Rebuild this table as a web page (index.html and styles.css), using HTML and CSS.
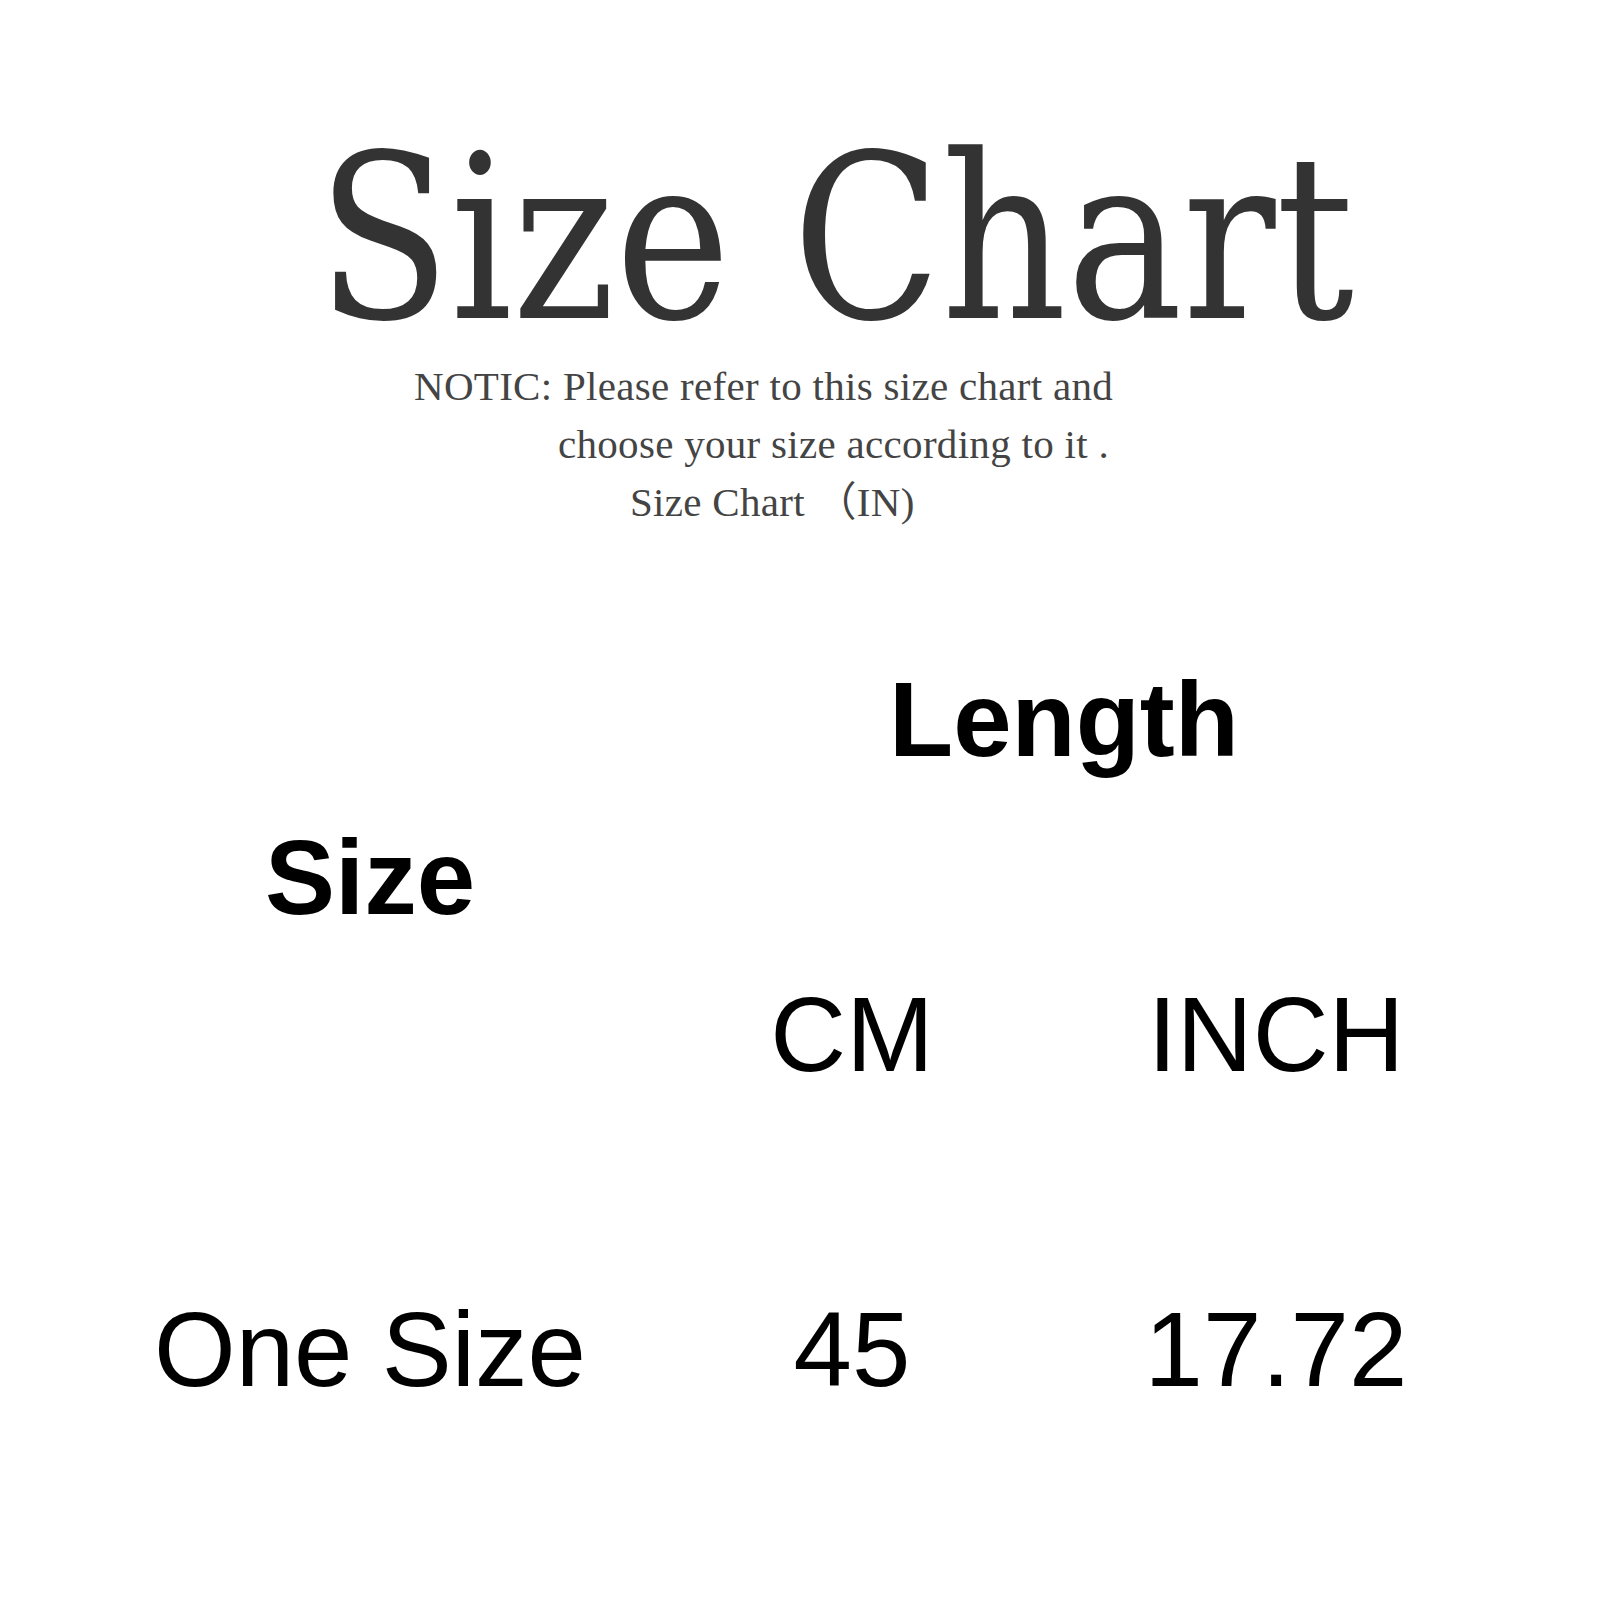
FILE: index.html
```html
<!DOCTYPE html>
<html lang="en">
<head>
<meta charset="utf-8">
<title>Size Chart</title>
<link rel="stylesheet" href="styles.css">
</head>
<body>
<div class="page">
  <h1 class="title"><span class="title-text">Size Chart</span></h1>
  <div class="notice">
    <p class="line line-1">NOTIC: Please refer to this size chart and</p>
    <p class="line line-2">choose your size according to it .</p>
    <p class="line line-3">Size Chart （IN)</p>
  </div>
  <div class="chart">
    <div class="cell head size-head">Size</div>
    <div class="cell head length-head">Length</div>
    <div class="cell unit cm">CM</div>
    <div class="cell unit inch">INCH</div>
    <div class="cell val c1">One Size</div>
    <div class="cell val c2">45</div>
    <div class="cell val c3">17.72</div>
  </div>
</div>
</body>
</html>
```
FILE: styles.css
```css
html, body {
  margin: 0;
  padding: 0;
  background: #ffffff;
}
.page {
  width: 1600px;
  height: 1600px;
  overflow: hidden;
}
.title {
  margin: 124px 0 0 0;
  padding-left: 317px;
  font-family: "DejaVu Serif", serif;
  font-stretch: condensed;
  font-weight: normal;
  font-size: 229px;
  line-height: 229px;
  color: #333333;
  white-space: nowrap;
}
.title-text {
  display: inline-block;
  transform: scaleX(0.945);
  transform-origin: left center;
}
.notice {
  margin-top: 4px;
  font-family: "Liberation Serif", "Noto Sans CJK SC", serif;
  font-size: 41px;
  line-height: 58px;
  letter-spacing: 0.3px;
  color: #444444;
}
.line {
  margin: 0;
  white-space: nowrap;
}
.line-1 { padding-left: 414px; }
.line-2 { padding-left: 558px; }
.line-3 { padding-left: 630px; }

.chart {
  margin-top: 114px;
  margin-left: 100px;
  display: grid;
  grid-template-columns: 540px 424px 424px;
  grid-template-rows: 150px 150px 150px;
  row-gap: 165px;
  font-family: "Liberation Sans", Arial, sans-serif;
  font-size: 105px;
  line-height: 150px;
  color: #000000;
}
.cell {
  text-align: center;
  white-space: nowrap;
}
.head { font-weight: bold; }
.size-head {
  grid-column: 1;
  grid-row: 1 / span 2;
  align-self: center;
}
.length-head {
  grid-column: 2 / span 2;
  grid-row: 1;
}
.cm { grid-column: 2; grid-row: 2; }
.inch { grid-column: 3; grid-row: 2; }
.c1 { grid-column: 1; grid-row: 3; }
.c2 { grid-column: 2; grid-row: 3; }
.c3 { grid-column: 3; grid-row: 3; }
```
